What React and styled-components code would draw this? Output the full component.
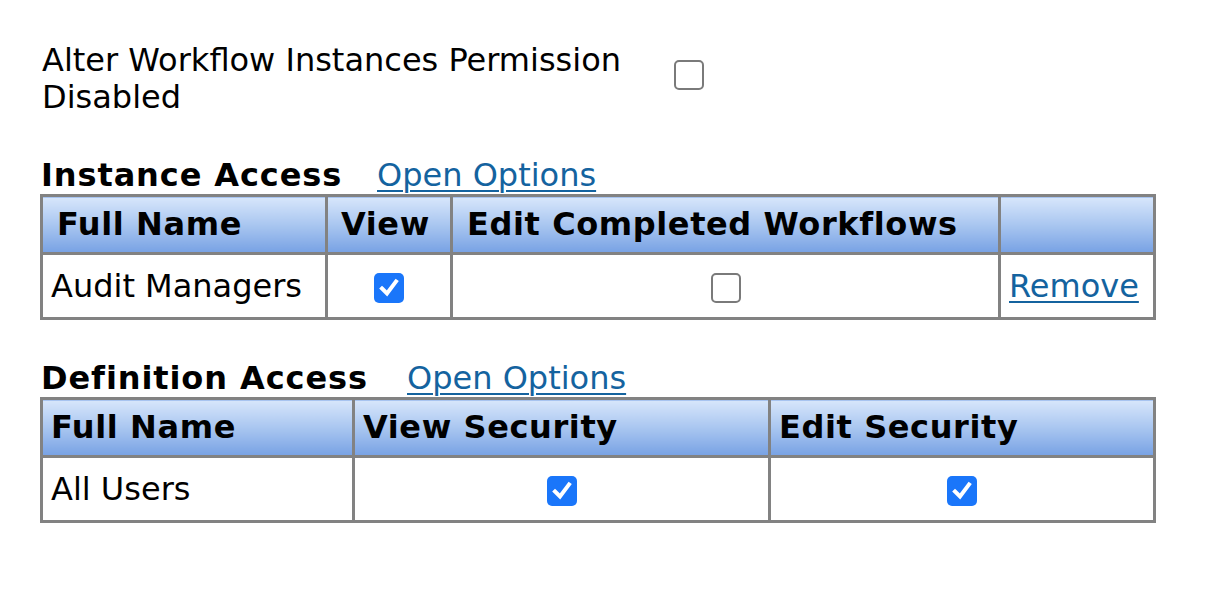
import React from 'react'
import styled, { createGlobalStyle } from 'styled-components'

const GlobalStyle = createGlobalStyle`
    body {
        margin: 0;
        background: #fff;
        color: #000;
        font-family: "DejaVu Sans", Verdana, sans-serif;
        font-size: 32px;
        line-height: 37px;
    }
`

const Page = styled.div`
    padding: 42px 0 0 40px;
`

const Setting = styled.div`
    display: flex;
    align-items: center;
    gap: 16px;
    margin-left: 2px;
`

const SettingLabel = styled.div`
    width: 616px;
`

const SettingToggle = styled.div`
    display: flex;
    margin-bottom: 9px;
`

const SectionHead = styled.div`
    display: flex;
    align-items: baseline;
    margin: ${p => p.$top}px 0 0 1px;
`

const Title = styled.h2`
    margin: 0;
    width: ${p => p.$width}px;
    font-size: 32px;
    line-height: 37px;
    font-weight: bold;
    letter-spacing: 0.9px;
`

const Link = styled.a`
    color: #14639f;
    text-decoration: underline;
    text-underline-offset: 4px;
    text-decoration-thickness: 2px;
    cursor: pointer;
`

const Grid = styled.table`
    width: 1116px;
    table-layout: fixed;
    border-collapse: collapse;
    border: 3px solid #828282;
`

const HeadCell = styled.th`
    height: 55px;
    padding: 0 0 0 ${p => p.$pad}px;
    text-align: left;
    font-weight: bold;
    letter-spacing: 0.6px;
    white-space: nowrap;
    border: 3px solid #828282;
    background: linear-gradient(to bottom, #d7e6fb 0%, #a9c6f0 50%, #78a2e4 100%);
`

const Cell = styled.td`
    height: 62px;
    padding: 0 0 0 8px;
    text-align: ${p => (p.$center ? 'center' : 'left')};
    vertical-align: middle;
    border: 3px solid #828282;
    ${p => p.$center && 'padding: 0;'}
`

const Box = styled.span`
    display: inline-flex;
    align-items: center;
    justify-content: center;
    box-sizing: border-box;
    width: 30px;
    height: 30px;
    border-radius: 5px;
    vertical-align: middle;
    border: ${p => (p.$checked ? 'none' : '2.5px solid #7a7a7a')};
    background: ${p => (p.$checked ? '#1a76fa' : '#fff')};
`

function Checkbox({ checked }) {
    return (
        <Box $checked={checked} role="checkbox" aria-checked={checked}>
            {checked && (
                <svg width="22" height="22" viewBox="0 0 22 22">
                    <path d="M4 11.5 L9 16.5 L18 4.5" fill="none" stroke="#fff"
                        strokeWidth="4" strokeLinecap="square" strokeLinejoin="miter" />
                </svg>
            )}
        </Box>
    )
}

function App() {
    return (
        <Page>
            <GlobalStyle />
            <Setting>
                <SettingLabel>Alter Workflow Instances Permission Disabled</SettingLabel>
                <SettingToggle>
                    <Checkbox checked={false} />
                </SettingToggle>
            </Setting>

            <SectionHead $top={41}>
                <Title $width={336}>Instance Access</Title>
                <Link>Open Options</Link>
            </SectionHead>
            <Grid>
                <colgroup>
                    <col style={{ width: 285 }} />
                    <col style={{ width: 125 }} />
                    <col style={{ width: 548 }} />
                    <col style={{ width: 155 }} />
                </colgroup>
                <thead>
                    <tr>
                        <HeadCell $pad={14}>Full Name</HeadCell>
                        <HeadCell $pad={13}>View</HeadCell>
                        <HeadCell $pad={14}>Edit Completed Workflows</HeadCell>
                        <HeadCell $pad={14}></HeadCell>
                    </tr>
                </thead>
                <tbody>
                    <tr>
                        <Cell>Audit Managers</Cell>
                        <Cell $center><Checkbox checked /></Cell>
                        <Cell $center><Checkbox checked={false} /></Cell>
                        <Cell><Link>Remove</Link></Cell>
                    </tr>
                </tbody>
            </Grid>

            <SectionHead $top={40}>
                <Title $width={366}>Definition Access</Title>
                <Link>Open Options</Link>
            </SectionHead>
            <Grid>
                <colgroup>
                    <col style={{ width: 312 }} />
                    <col style={{ width: 416 }} />
                    <col style={{ width: 385 }} />
                </colgroup>
                <thead>
                    <tr>
                        <HeadCell $pad={8}>Full Name</HeadCell>
                        <HeadCell $pad={8}>View Security</HeadCell>
                        <HeadCell $pad={8}>Edit Security</HeadCell>
                    </tr>
                </thead>
                <tbody>
                    <tr>
                        <Cell>All Users</Cell>
                        <Cell $center><Checkbox checked /></Cell>
                        <Cell $center><Checkbox checked /></Cell>
                    </tr>
                </tbody>
            </Grid>
        </Page>
    )
}

export default App
